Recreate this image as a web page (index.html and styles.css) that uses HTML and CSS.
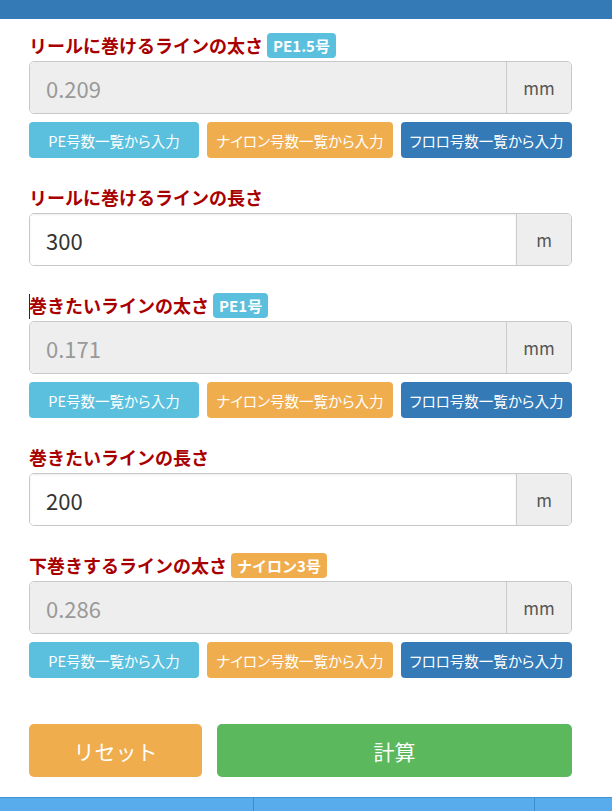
FILE: index.html
```html
<!DOCTYPE html>
<html>
<head>
    <meta charset="utf-8">
    <meta name="viewport" content="width=device-width, initial-scale=1">
    <title>ライン計算</title>
    <link rel="stylesheet" href="styles.css">
</head>
<body>
<div class="topbar"></div>
<div class="calc-container">
    <div class="form-group">
        <div class="field-label">リールに巻けるラインの太さ <span class="badge badge-info">PE1.5号</span></div>
        <div class="input-group">
            <input type="text" class="form-control" value="0.209" disabled>
            <span class="addon addon-mm">mm</span>
        </div>
        <div class="btn-row">
            <button class="btn btn-info">PE号数一覧から入力</button>
            <button class="btn btn-warning">ナイロン号数一覧から入力</button>
            <button class="btn btn-primary">フロロ号数一覧から入力</button>
        </div>
    </div>

    <div class="form-group">
        <div class="field-label">リールに巻けるラインの長さ</div>
        <div class="input-group">
            <input type="text" class="form-control" value="300">
            <span class="addon">m</span>
        </div>
    </div>

    <div class="form-group">
        <div class="field-label"><span class="caret"></span>巻きたいラインの太さ <span class="badge badge-info">PE1号</span></div>
        <div class="input-group">
            <input type="text" class="form-control" value="0.171" disabled>
            <span class="addon addon-mm">mm</span>
        </div>
        <div class="btn-row">
            <button class="btn btn-info">PE号数一覧から入力</button>
            <button class="btn btn-warning">ナイロン号数一覧から入力</button>
            <button class="btn btn-primary">フロロ号数一覧から入力</button>
        </div>
    </div>

    <div class="form-group">
        <div class="field-label">巻きたいラインの長さ</div>
        <div class="input-group">
            <input type="text" class="form-control" value="200">
            <span class="addon">m</span>
        </div>
    </div>

    <div class="form-group">
        <div class="field-label">下巻きするラインの太さ <span class="badge badge-warning">ナイロン3号</span></div>
        <div class="input-group">
            <input type="text" class="form-control" value="0.286" disabled>
            <span class="addon addon-mm">mm</span>
        </div>
        <div class="btn-row">
            <button class="btn btn-info">PE号数一覧から入力</button>
            <button class="btn btn-warning">ナイロン号数一覧から入力</button>
            <button class="btn btn-primary">フロロ号数一覧から入力</button>
        </div>
    </div>

    <div class="actions">
        <button class="btn btn-lg btn-warning">リセット</button>
        <button class="btn btn-lg btn-success">計算</button>
    </div>
</div>
<div class="bottom-nav">
    <div class="nav-cell"></div>
    <div class="nav-cell"></div>
    <div class="nav-cell"></div>
</div>
</body>
</html>
```

FILE: styles.css
```css
body {
    font-family: "Noto Sans CJK JP", "Noto Sans", sans-serif;
    background-color: #fff;
    color: #333;
    margin: 0;
    padding: 0;
}

.topbar {
    height: 19px;
    background-color: #337ab7;
}

.calc-container {
    width: 543px;
    padding: 13px 0 0 29px;
}

.form-group {
    margin-bottom: 26px;
}

.field-label {
    height: 26px;
    font-size: 18px;
    font-weight: bold;
    line-height: 26px;
    color: #a80000;
    margin-bottom: 3px;
    white-space: nowrap;
}
.caret {
    display: inline-block;
    width: 1px;
    height: 25px;
    margin-right: -1px;
    background-color: #8a0000;
    vertical-align: -6px;
}

.badge {
    display: inline-block;
    font-size: 15px;
    font-weight: bold;
    line-height: 25px;
    height: 25px;
    padding: 0 6px;
    border-radius: 4px;
    color: #fff;
    vertical-align: top;
    margin-top: 1px;
}
.badge-info { background-color: #5bc0de; }
.badge-warning { background-color: #f0ad4e; }

.input-group {
    display: flex;
    height: 53px;
    border: 1px solid #c8c8c8;
    border-radius: 5px;
    box-sizing: border-box;
    overflow: hidden;
}
.form-control {
    flex: 1;
    min-width: 0;
    border: none;
    margin: 0;
    padding: 0 16px;
    font-family: "Noto Sans CJK JP", "Noto Sans", sans-serif;
    font-size: 22px;
    color: #333;
    background-color: #fff;
    box-shadow: inset 0 1px 2px rgba(0,0,0,0.08);
    outline: none;
}
.form-control:disabled {
    background-color: #eee;
    color: #999;
    box-shadow: none;
}
.addon {
    width: 54px;
    display: flex;
    align-items: center;
    justify-content: center;
    background-color: #eee;
    border-left: 1px solid #ccc;
    font-size: 17px;
    color: #555;
}
.addon-mm {
    width: 64px;
}

.btn-row {
    display: grid;
    grid-template-columns: 170px 186px 1fr;
    column-gap: 8px;
    margin-top: 8px;
}
.btn {
    height: 36px;
    padding: 0;
    border: none;
    border-radius: 4px;
    font-family: "Noto Sans CJK JP", "Noto Sans", sans-serif;
    font-size: 14.5px;
    font-feature-settings: "palt";
    color: #fff;
    cursor: pointer;
    white-space: nowrap;
}
.btn-info { background-color: #5bc0de; }
.btn-warning { background-color: #f0ad4e; }
.btn-primary { background-color: #337ab7; }
.btn-success { background-color: #5cb85c; }

.actions {
    display: grid;
    grid-template-columns: 173px 1fr;
    column-gap: 15px;
    margin-top: 46px;
}
.btn-lg {
    height: 53px;
    font-size: 21px;
    font-feature-settings: normal;
    border-radius: 5px;
}

.bottom-nav {
    display: flex;
    margin-top: 20px;
    height: 20px;
    background-color: #58acec;
    border-top: 1px solid #3f93d8;
}
.nav-cell {
    width: 253px;
}
.nav-cell + .nav-cell {
    width: 280px;
    border-left: 1px solid #3a8dd3;
}
.nav-cell:last-child {
    flex: 1;
}
```
